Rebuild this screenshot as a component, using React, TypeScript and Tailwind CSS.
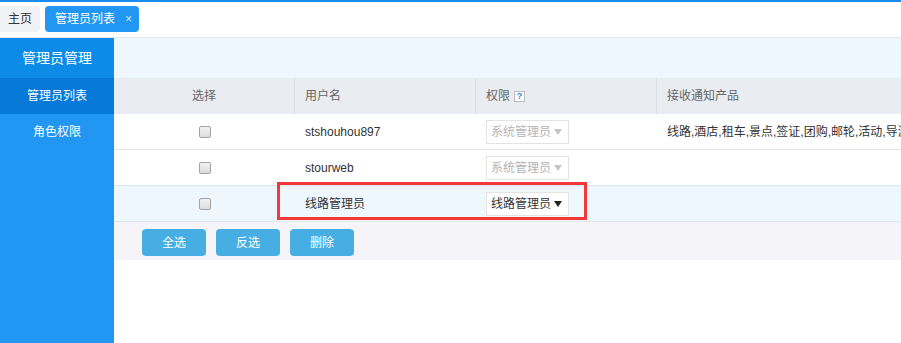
import React from "react";

const font = { fontFamily: '"Liberation Sans", "Noto Sans CJK SC", sans-serif' };

function Check() {
  return (
    <span className="inline-block w-[12px] h-[12px] rounded-[2px] border border-[#a3a3a3] bg-gradient-to-b from-[#f2f2f2] to-[#dcdcdc]" />
  );
}

function RoleSelect({ label, disabled }: { label: string; disabled?: boolean }) {
  return (
    <div
      className={`flex items-center justify-between w-[83px] h-[24px] pl-[4px] pr-[6px] border border-[#e3e3e3] bg-white text-[12px] ${
        disabled ? "text-[#b4b4b4]" : "text-[#333]"
      }`}
    >
      <span>{label}</span>
      <svg width="8" height="6" viewBox="0 0 8 6">
        <path d="M0 0 L8 0 L4 6 Z" fill={disabled ? "#c4c4c4" : "#222"} />
      </svg>
    </div>
  );
}

const rows = [
  { name: "stshouhou897", role: "系统管理员", disabled: true, products: "线路,酒店,租车,景点,签证,团购,邮轮,活动,导游,门票,保险" },
  { name: "stourweb", role: "系统管理员", disabled: true, products: "" },
  { name: "线路管理员", role: "线路管理员", disabled: false, products: "" },
];

export default function App() {
  return (
    <div className="w-[901px] h-[343px] flex flex-col bg-white overflow-hidden" style={font}>
      {/* tab bar */}
      <div className="h-[38px] shrink-0 border-t-2 border-t-[#1a8cf0] border-b border-b-[#e3e7ec] flex items-start pt-[4px] gap-[5px]">
        <div className="h-[26px] w-[40px] rounded-r-[4px] bg-[#f0f2f6] text-[12px] text-[#333] flex items-center justify-center">
          主页
        </div>
        <div className="h-[26px] w-[94px] rounded-[4px] bg-[#2196f3] text-[12px] text-white flex items-center pl-[10px] gap-[10px]">
          <span>管理员列表</span>
          <span className="text-[#cfe6fb] text-[12px]">×</span>
        </div>
      </div>

      <div className="flex flex-1 min-h-0">
        {/* sidebar */}
        <div className="w-[114px] shrink-0 bg-[#2196f3] text-white flex flex-col">
          <div className="h-[40px] bg-[#0d8be9] flex items-center justify-center text-[14px]">管理员管理</div>
          <div className="h-[36px] bg-[#0679d9] flex items-center justify-center text-[12px]">管理员列表</div>
          <div className="h-[36px] flex items-center justify-center text-[12px]">角色权限</div>
        </div>

        {/* content */}
        <div className="flex-1 min-w-0 overflow-hidden flex flex-col">
          <div className="h-[40px] shrink-0 bg-[#eff7fe]" />

          <div className="w-[1000px] text-[12px]">
            <div className="grid grid-cols-[181px_181px_181px_1fr] h-[36px] bg-[#e9ecf0] text-[#666]">
              <div className="border-r border-[#d9dee4] flex items-center justify-center">选择</div>
              <div className="border-r border-[#d9dee4] flex items-center pl-[10px]">用户名</div>
              <div className="border-r border-[#d9dee4] flex items-center pl-[10px] gap-[4px]">
                <span>权限</span>
                <span className="w-[11px] h-[11px] border border-[#bbb] bg-white text-[#1a8ce8] text-[9px] font-bold leading-none flex items-center justify-center">
                  ?
                </span>
              </div>
              <div className="flex items-center pl-[10px]">接收通知产品</div>
            </div>

            {rows.map((r, i) => (
              <div
                key={i}
                className={`relative grid grid-cols-[181px_181px_181px_1fr] h-[36px] border-b border-[#e1e6eb] text-[#333] ${
                  i === 2 ? "bg-[#eff7fe]" : "bg-white"
                }`}
              >
                <div className="flex items-center justify-center">
                  <Check />
                </div>
                <div className="flex items-center pl-[10px]">{r.name}</div>
                <div className="flex items-center pl-[10px]">
                  <RoleSelect label={r.role} disabled={r.disabled} />
                </div>
                <div className="flex items-center pl-[10px] whitespace-nowrap">{r.products}</div>
                {i === 2 && (
                  <div className="absolute left-[163px] top-[-4px] w-[310px] h-[38px] border-[3px] border-[#f23838]" />
                )}
              </div>
            ))}

            <div className="h-[38px] bg-[#f4f4f9] flex items-start pt-[7px] pl-[28px] gap-[10px]">
              {["全选", "反选", "删除"].map((b) => (
                <button
                  key={b}
                  className="w-[64px] h-[27px] rounded-[4px] bg-[#46aee3] text-white text-[12px] flex items-center justify-center"
                >
                  {b}
                </button>
              ))}
            </div>
          </div>
        </div>
      </div>
    </div>
  );
}
